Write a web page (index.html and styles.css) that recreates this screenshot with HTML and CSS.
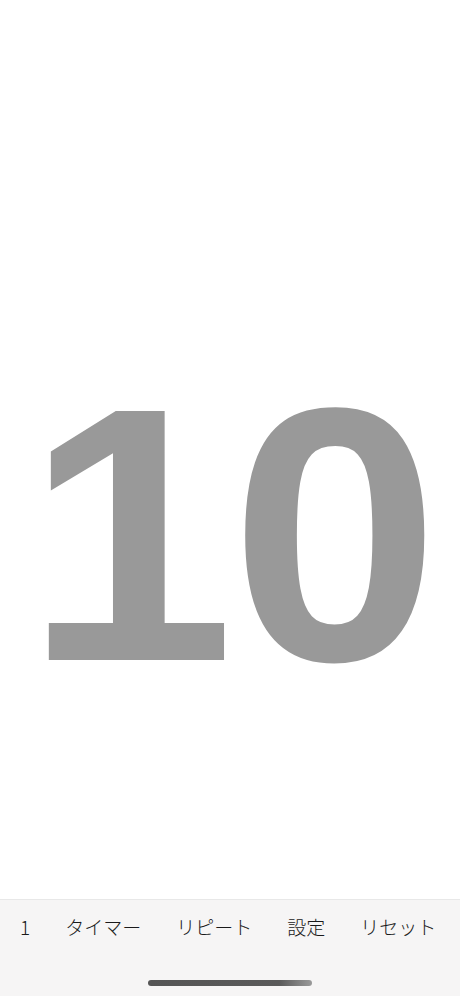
FILE: index.html
```html
<!DOCTYPE html>
<html>
<head>
<meta charset="utf-8">
<link rel="stylesheet" href="styles.css">
</head>
<body>
<div class="app">
  <main class="display">
    <div class="count">10</div>
  </main>
  <nav class="toolbar">
    <div class="items">
      <span class="item">1</span>
      <span class="item">タイマー</span>
      <span class="item">リピート</span>
      <span class="item">設定</span>
      <span class="item">リセット</span>
    </div>
    <div class="home"><div class="indicator"></div></div>
  </nav>
</div>
</body>
</html>
```
FILE: styles.css
```css
html, body {
  margin: 0;
  padding: 0;
  background: #ffffff;
}
.app {
  width: 460px;
  height: 996px;
  display: flex;
  flex-direction: column;
}
.display {
  flex: 1;
  display: flex;
  align-items: center;
  justify-content: center;
  padding-top: 170px;
  box-sizing: border-box;
}
.count {
  font-family: "Liberation Sans", Arial, sans-serif;
  font-weight: 700;
  font-size: 362px;
  line-height: 1;
  letter-spacing: -4px;
  color: #999999;
  transform: scaleX(1.04);
}
.toolbar {
  height: 96px;
  background: #f6f5f5;
  border-top: 1px solid #e8e8e8;
  display: flex;
  flex-direction: column;
}
.items {
  display: flex;
  gap: 35px;
  padding: 15px 0 0 20px;
  height: 24px;
  align-items: center;
  font-family: "Noto Sans CJK JP", "Noto Sans", sans-serif;
  font-weight: 300;
  font-size: 19px;
  color: #1a1a1a;
}
.item {
  line-height: 24px;
}
.home {
  flex: 1;
  display: flex;
  justify-content: center;
  align-items: flex-end;
  padding-bottom: 10px;
}
.indicator {
  width: 164px;
  height: 6px;
  border-radius: 3px;
  background: linear-gradient(to right, #555555 0%, #5a5a5a 80%, #9a9a9a 100%);
}
```
